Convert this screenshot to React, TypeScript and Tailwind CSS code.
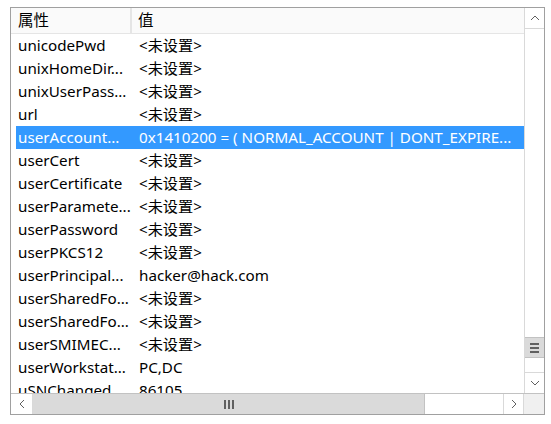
import React from "react";

const rows: [string, string][] = [
  ["unicodePwd", "<未设置>"],
  ["unixHomeDir...", "<未设置>"],
  ["unixUserPass...", "<未设置>"],
  ["url", "<未设置>"],
  ["userAccount...", "0x1410200 = ( NORMAL_ACCOUNT | DONT_EXPIRE..."],
  ["userCert", "<未设置>"],
  ["userCertificate", "<未设置>"],
  ["userParamete...", "<未设置>"],
  ["userPassword", "<未设置>"],
  ["userPKCS12", "<未设置>"],
  ["userPrincipal...", "hacker@hack.com"],
  ["userSharedFo...", "<未设置>"],
  ["userSharedFo...", "<未设置>"],
  ["userSMIMEC...", "<未设置>"],
  ["userWorkstat...", "PC,DC"],
  ["uSNChanged...", "86105"],
];

const Chevron = ({ dir }: { dir: "up" | "down" | "left" | "right" }) => {
  const paths: Record<string, string> = {
    up: "M1 6 L5 2 L9 6",
    down: "M1 2 L5 6 L9 2",
    left: "M6 1 L2 5 L6 9",
    right: "M2 1 L6 5 L2 9",
  };
  const vert = dir === "up" || dir === "down";
  return (
    <svg width={vert ? 10 : 8} height={vert ? 8 : 10} viewBox={vert ? "0 0 10 8" : "0 0 8 10"}>
      <path d={paths[dir]} fill="none" stroke="#606060" strokeWidth="1" />
    </svg>
  );
};

export default function App() {
  return (
    <div
      className="w-[551px] h-[424px] bg-white"
      style={{ fontFamily: '"Noto Sans", "Noto Sans CJK SC", sans-serif' }}
    >
      <div className="ml-[10px] pt-[7px]">
        <div className="w-[535px] h-[408px] border border-[#a0a0a0] flex flex-col">
          <div className="flex flex-1 min-h-0">
            {/* list */}
            <div className="flex-1 min-w-0 flex flex-col overflow-hidden">
              <div className="h-[26px] bg-[#fafafa] border-b border-[#e5e5e5] flex text-[15.5px] text-black shrink-0">
                <div className="w-[121px] pl-[7px] border-r-2 border-[#e5e5e5] leading-[25px]">属性</div>
                <div className="pl-[6px] leading-[25px]">值</div>
              </div>
              <div className="pl-[5px] flex-1 overflow-hidden">
                {rows.map(([k, v], i) => {
                  const sel = i === 4;
                  return (
                    <div
                      key={i}
                      className={
                        "h-[23px] flex text-[15.2px] whitespace-nowrap leading-[22px] " +
                        (sel ? "bg-[#3399ff] text-white" : "text-black")
                      }
                    >
                      <div className="w-[121px] pl-[2px] overflow-hidden shrink-0">{k}</div>
                      <div className="pl-[2px] overflow-hidden">{v}</div>
                    </div>
                  );
                })}
              </div>
            </div>
            {/* vertical scrollbar */}
            <div className="w-[20px] shrink-0 border-l border-[#d9d9d9] bg-white flex flex-col">
              <div className="h-[21px] border-b border-[#d9d9d9] flex items-center justify-center">
                <Chevron dir="up" />
              </div>
              <div className="flex-1" />
              <div className="h-[21px] bg-[#dadada] border-y border-[#c2c2c2] flex flex-col items-center justify-center gap-[2px]">
                <div className="w-[9px] h-[2px] bg-[#606060]" />
                <div className="w-[9px] h-[2px] bg-[#606060]" />
                <div className="w-[9px] h-[2px] bg-[#606060]" />
              </div>
              <div className="h-[14px]" />
              <div className="h-[21px] border-t border-[#d9d9d9] flex items-center justify-center">
                <Chevron dir="down" />
              </div>
            </div>
          </div>
          {/* horizontal scrollbar */}
          <div className="h-[21px] shrink-0 flex border-t border-[#c2c2c2]">
            <div className="flex-1 flex bg-white">
              <div className="w-[22px] border-r border-[#d9d9d9] flex items-center justify-center">
                <Chevron dir="left" />
              </div>
              <div className="w-[392px] bg-[#dadada] border-r border-[#c2c2c2] flex items-center justify-center gap-[2px]">
                <div className="w-[2px] h-[9px] bg-[#606060]" />
                <div className="w-[2px] h-[9px] bg-[#606060]" />
                <div className="w-[2px] h-[9px] bg-[#606060]" />
              </div>
              <div className="flex-1" />
              <div className="w-[21px] border-l border-r border-[#d9d9d9] flex items-center justify-center">
                <Chevron dir="right" />
              </div>
            </div>
            <div className="w-[20px] bg-[#f0f0f0]" />
          </div>
        </div>
      </div>
    </div>
  );
}
